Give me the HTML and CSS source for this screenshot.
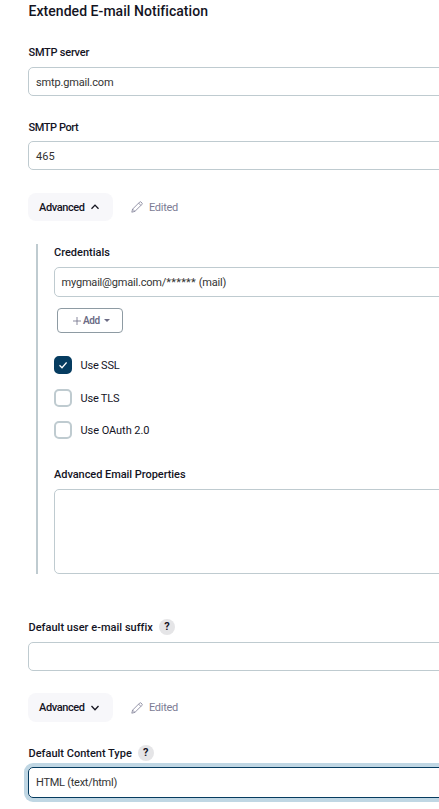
FILE: index.html
```html
<!DOCTYPE html>
<html lang="en">
<head>
<meta charset="utf-8">
<title>Extended E-mail Notification</title>
<link rel="stylesheet" href="styles.css">
</head>
<body>
<svg class="symbols" aria-hidden="true">
  <symbol id="pencil" viewBox="0 0 12 12"><path d="M.8 11.2 1.6 8.1 8.6 1.1Q9.3.4 10 1L11 2Q11.6 2.7 10.9 3.4L3.9 10.4ZM7.6 2.1 9.9 4.4M1.6 8.1 3.9 10.4"/></symbol>
  <symbol id="down" viewBox="0 0 8 6"><path d="M.5 1 4 4.7 7.5 1"/></symbol>
  <symbol id="up" viewBox="0 0 8 6"><path d="M.5 4.8 4 1.1 7.5 4.8"/></symbol>
</svg>
<main class="page">
  <h1 class="title">Extended E-mail Notification</h1>
  <section class="field server">
    <div class="label"><span class="t-server">SMTP server</span></div>
    <div class="input"><span class="t-gmail">smtp.gmail.com</span></div>
  </section>
  <section class="field port">
    <div class="label"><span class="t-port">SMTP Port</span></div>
    <div class="input"><span class="t-465">465</span></div>
  </section>
  <div class="actions">
    <button class="advanced"><span>Advanced</span><svg class="chevron"><use href="#up"/></svg></button>
    <div class="edited"><svg class="pencil"><use href="#pencil"/></svg><span>Edited</span></div>
  </div>
  <section class="nested">
    <div class="label"><span class="t-cred">Credentials</span></div>
    <div class="input select"><span class="t-mail">mygmail@gmail.com/<span class="stars">******</span> (mail)</span></div>
    <button class="add"><svg class="plus" viewBox="0 0 8 8"><path d="M4 0v8M0 4h8"/></svg><span>Add</span><i class="caret"></i></button>
    <div class="checks">
      <div class="check"><span class="box checked"><svg viewBox="0 0 8 8"><path d="M.5 4.3 3 6.7 7.6 1.4"/></svg></span><span class="name t-ssl">Use SSL</span></div>
      <div class="check"><span class="box"></span><span class="name t-tls">Use TLS</span></div>
      <div class="check"><span class="box"></span><span class="name t-oauth">Use OAuth 2.0</span></div>
    </div>
    <div class="label props"><span class="t-props">Advanced Email Properties</span></div>
    <div class="input area"></div>
  </section>
  <section class="field suffix">
    <div class="label"><span class="t-suffix">Default user e-mail suffix</span><span class="help">?</span></div>
    <div class="input"></div>
  </section>
  <div class="actions second">
    <button class="advanced"><span>Advanced</span><svg class="chevron"><use href="#down"/></svg></button>
    <div class="edited"><svg class="pencil"><use href="#pencil"/></svg><span>Edited</span></div>
  </div>
  <section class="field content">
    <div class="label"><span class="t-content">Default Content Type</span><span class="help">?</span></div>
    <div class="input focused"><span class="t-html">HTML (text/html)</span></div>
  </section>
</main>
</body>
</html>
```
FILE: styles.css
```css
* { box-sizing: border-box; }
body {
  margin: 0;
  height: 809px;
  overflow: hidden;
  background: #fff;
  color: #14141f;
  font: 500 11px/16px Roboto, "Liberation Sans", sans-serif;
}
button { font: inherit; color: inherit; border: 0; margin: 0; }
svg { fill: none; stroke: currentColor; flex: none; display: block; }
span { white-space: nowrap; }
.symbols { display: none; }
.page { width: 460px; padding: 1px 0 0 28px; }
.title { margin: 0; font-size: 14px; line-height: 20px; font-weight: 500; letter-spacing: .05px; padding-left: .5px; }
.label { height: 16px; display: flex; align-items: center; padding-left: .5px; }
.label > span:first-child { padding-top: 2px; }
.nested .label { padding-left: 0; }
.input {
  height: 29px;
  margin-top: 7px;
  padding: 2px 7px 0;
  display: flex;
  align-items: center;
  border: 1px solid #bfcbd0;
  border-radius: 5px;
  font-weight: 400;
  color: #333;
}
.server { margin-top: 23px; }
.port { margin-top: 23px; }
.port .input { margin-top: 6px; }
.actions { display: flex; align-items: center; margin-top: 23px; height: 28px; }
.advanced {
  width: 85px;
  height: 100%;
  padding: 0 0 0 11px;
  display: flex;
  align-items: center;
  gap: 7px;
  border-radius: 8px;
  background: #f7f7fa;
}
.advanced span { width: 45px; flex: none; text-align: left; letter-spacing: -.4px; }
.actions:not(.second) span { padding-top: 2px; }
.chevron { width: 8px; height: 6px; stroke-width: 1.3; }
.edited { display: flex; align-items: center; gap: 6px; margin-left: 18px; color: #7c7c94; font-weight: 400; }
.edited span { letter-spacing: -.3px; }
.pencil { width: 12px; height: 12px; stroke-width: .8; }
.nested { margin: 23px 0 0 8px; height: 330px; padding-left: 16px; border-left: 2px solid #bfcbd0; }
.select { height: 30px; padding-left: 6.5px; }
.add {
  margin: 11px 0 0 3px;
  width: 66px;
  height: 25px;
  display: flex;
  align-items: center;
  padding: 0 0 0 15px;
  background: #fff;
  border: 1px solid #8e9ba3;
  border-radius: 4px;
  color: #6c6c85;
  font-size: 10px;
  font-weight: 600;
}
.plus { width: 8px; height: 8px; margin-right: 2px; stroke-width: .8; }
.add span { letter-spacing: -.4px; }
.caret { border: 3px solid transparent; border-top-color: currentColor; border-bottom: 0; margin-left: 4px; }
.checks { margin-top: 23px; height: 83px; display: flex; flex-direction: column; justify-content: space-between; }
.check { display: flex; align-items: center; height: 18px; gap: 8.5px; }
.name { padding-top: 2px; font-weight: 450; }
.box { width: 18px; height: 18px; border: 2px solid #bfcbd0; border-radius: 5px; }
.checked { background: #063c60; border-color: #063c60; color: #fff; display: grid; place-items: center; }
.checked svg { width: 8px; height: 8px; stroke-width: 1.3; }
.nested .props { margin-top: 27px; }
.area { height: 85px; }
.suffix { margin-top: 45px; }
.help { width: 16px; height: 16px; border-radius: 50%; background: #e5e5e7; text-align: center; margin-left: 6px; font-weight: 700; }
.second { margin-top: 22px; height: 29px; }
.content { margin-top: 23px; }
.content .input { margin-top: 6px; }
.focused { height: 31px; padding-top: 0; border-color: #063c60; box-shadow: 0 0 0 4px #c0d7e4; }
.t-gmail { letter-spacing: -.17px; }
.t-mail { letter-spacing: -.19px; }
.stars { letter-spacing: .25px; }
.t-server { letter-spacing: -.25px; }
.t-port { letter-spacing: -.42px; }
.t-html { letter-spacing: -.26px; }
.t-465 { letter-spacing: .1px; }
.t-props { letter-spacing: -.05px; }
.t-suffix { letter-spacing: .02px; }
.t-ssl, .t-tls { letter-spacing: -.2px; }
.t-oauth { letter-spacing: -.06px; }
```
